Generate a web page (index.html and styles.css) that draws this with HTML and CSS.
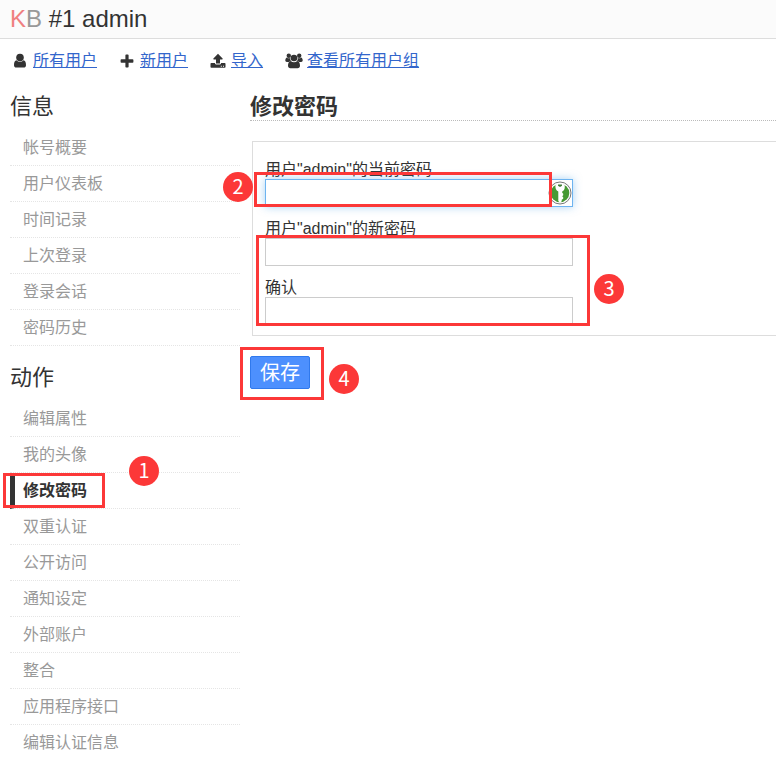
FILE: index.html
```html
<!DOCTYPE html>
<html lang="zh-CN">
<head>
<meta charset="utf-8">
<meta name="viewport" content="width=device-width, initial-scale=1">
<title>#1 admin</title>
<link rel="stylesheet" href="styles.css">
</head>
<body>
<header class="topbar">
  <h1 class="title"><a class="logo" href="#">K<span>B</span></a> #1 admin</h1>
</header>
<nav class="menu">
  <span class="menu-item"><svg class="icon" viewBox="0 0 16 16" aria-hidden="true"><circle cx="8" cy="4.600" r="3.800"/><path d="M4.600 7.200C2.700 7.500 2 9.500 2 12.200c0 1.500 1 2.300 2.300 2.300h7.400c1.300 0 2.300-.8 2.300-2.300 0-2.700-.7-4.700-2.600-5C9.500 9.500 6.500 9.500 4.600 7.200z"/></svg><a href="#">所有用户</a></span>
  <span class="menu-item"><svg class="icon" viewBox="0 0 16 16" aria-hidden="true"><path d="M7.200 1.500h1.600q.8 0 .8.800v4h4q.8 0 .8.800v1.800q0 .8-.8.800h-4v4q0 .8-.8.800H7.200q-.8 0-.8-.8v-4h-4q-.8 0-.8-.8V7.100q0-.8.800-.8h4v-4q0-.8.800-.8z"/></svg><a href="#">新用户</a></span>
  <span class="menu-item"><svg class="icon" viewBox="0 0 16 16" aria-hidden="true"><path d="M8 .8l4.600 4.700c.3.400.1.900-.4.900H10v4.200H6V6.400H3.800c-.5 0-.7-.5-.4-.9z"/><path fill-rule="evenodd" d="M1.300 10h3.600c.2 1 .9 1.600 1.800 1.600h2.600c.9 0 1.600-.6 1.800-1.600h3.600q.8 0 .8.800V14q0 .8-.8.800H1.300q-.8 0-.8-.8v-3.200q0-.8.800-.8zM10.800 12.700v1h1v-1zm2.200 0v1h1v-1z"/></svg><a href="#">导入</a></span>
  <span class="menu-item menu-item-groups"><svg class="icon icon-wide" viewBox="0 0 18 16" aria-hidden="true"><circle cx="3.800" cy="2.700" r="2.200"/><circle cx="14.200" cy="2.700" r="2.200"/><circle cx="9" cy="5" r="3.300"/><path d="M1.800 4.500C.8 4.900.3 6.200.3 7.500c0 .9.700 1.400 1.500 1.400h2.300c.4-.6 1-.9 1.800-1-.6-.9-.8-1.700-.7-2.800-1.200.5-2.400.3-3.400-.6zM16.200 4.500c1 .4 1.500 1.700 1.500 3 0 .9-.7 1.400-1.500 1.400h-2.300c-.4-.6-1-.9-1.800-1 .6-.9.800-1.700.7-2.800 1.200.5 2.400.3 3.400-.6z"/><path d="M5.800 8C3.900 8.200 3 10 3 12.800 3 14.300 4 15.200 5.400 15.200h7.200c1.400 0 2.400-.9 2.400-2.400 0-2.800-.9-4.600-2.800-4.800-1.700 1.600-4.700 1.600-6.400 0z"/></svg><a href="#">查看所有用户组</a></span>
</nav>
<div class="layout">
  <aside class="sidebar">
    <h2>信息</h2>
    <ul>
      <li><a href="#">帐号概要</a></li>
      <li><a href="#">用户仪表板</a></li>
      <li><a href="#">时间记录</a></li>
      <li><a href="#">上次登录</a></li>
      <li><a href="#">登录会话</a></li>
      <li><a href="#">密码历史</a></li>
    </ul>
    <h2>动作</h2>
    <ul>
      <li><a href="#">编辑属性</a></li>
      <li><a href="#">我的头像</a></li>
      <li class="active"><a href="#">修改密码</a><span class="frame frame-1"></span><span class="badge badge-1">1</span></li>
      <li><a href="#">双重认证</a></li>
      <li><a href="#">公开访问</a></li>
      <li><a href="#">通知设定</a></li>
      <li><a href="#">外部账户</a></li>
      <li><a href="#">整合</a></li>
      <li><a href="#">应用程序接口</a></li>
      <li><a href="#">编辑认证信息</a></li>
    </ul>
  </aside>
  <main class="content">
    <h2>修改密码</h2>
    <form>
      <div class="panel">
        <div class="field">
          <label for="current">用户"admin"的当前密码</label>
          <div class="control">
            <input class="focused" id="current" type="password">
            <svg class="key" viewBox="0 0 24 24" aria-hidden="true"><circle cx="12" cy="12" r="11" fill="#fff" stroke="#777"/><circle cx="12" cy="12" r="9.300" fill="#469a34"/><path fill="#fff" d="M7.500 3.500C7 7 8 9.500 10.300 10.500V20l1.700 2 1.700-1.700v-1.600l1.500-1v-1.500l-1-1 1-1v-1.500l-1-1v-1.200C16.500 9.500 17.300 7 16.500 3.500L12 2z"/><path fill="#3f7d38" d="M10 3.500h4v1.300L12 6l-2-1.200z"/></svg>
            <span class="frame frame-2"></span><span class="badge badge-2">2</span>
          </div>
        </div>
        <div class="field">
          <label for="new">用户"admin"的新密码</label>
          <div class="control">
            <input id="new" type="password">
            <span class="frame frame-3"></span><span class="badge badge-3">3</span>
          </div>
        </div>
        <div class="field">
          <label for="confirm">确认</label>
          <div class="control"><input id="confirm" type="password"></div>
        </div>
      </div>
      <div class="actions">
        <button type="button">保存</button>
        <span class="frame frame-4"></span><span class="badge badge-4">4</span>
      </div>
    </form>
  </main>
</div>
</body>
</html>
```
FILE: styles.css
```css
* { box-sizing: border-box; }
body {
  margin: 0;
  color: #333;
  background: #fff;
  font: 16px/20px "Liberation Sans", "Noto Sans CJK SC", sans-serif;
  overflow-x: hidden;
}
h1, h2, ul { margin: 0; padding: 0; font-weight: 400; }
ul { list-style: none; }
.topbar {
  padding: 4px 10px;
  background: #fbfbfb;
  border-bottom: 1px solid #ddd;
}
.title { font-size: 24px; line-height: 30px; }
.logo { color: #f08080; text-decoration: none; }
.logo span { color: #999; }
.menu {
  display: flex;
  gap: 22px;
  padding: 11px 12px 0;
}
.menu-item { display: flex; align-items: center; gap: 5px; }
.menu-item-groups { gap: 4px; }
.menu a { color: #36c; line-height: 22px; }
.icon { width: 16px; height: 16px; fill: #333; }
.icon-wide { width: 18px; }
.layout {
  display: flex;
  gap: 10px;
  padding: 20px 0 0 10px;
}
.sidebar { flex: 0 0 230px; }
.sidebar h2, .content h2 { padding-top: 2px; font-size: 22px; line-height: 26px; }
.sidebar h2 { margin-bottom: 10px; }
.sidebar ul { margin-bottom: 17px; }
.sidebar li {
  position: relative;
  height: 36px;
  padding: 8px 0 7px 13px;
  border-bottom: 1px dotted #e5e5e5;
}
.sidebar li a { color: #999; text-decoration: none; }
.sidebar .active {
  padding-left: 8px;
  border-left: 5px solid #333;
}
.sidebar .active a { color: #333; font-weight: 700; }
.content { flex: 1; min-width: 0; }
.content h2 { font-weight: 700; border-bottom: 1px dotted #bbb; }
.panel {
  margin: 20px -1px 0 2px;
  padding: 17px 12px 10px;
  border: 1px solid #ddd;
}
.field { margin-bottom: 11px; }
.field:last-child { margin-bottom: 0; }
label { display: block; height: 20px; line-height: 22px; }
.control { position: relative; max-width: 308px; }
input {
  display: block;
  width: 100%;
  height: 28px;
  padding: 0 30px 0 4px;
  border: 1px solid #ccc;
  background: #fff;
  font: inherit;
}
.focused {
  border-color: #6eb4f0;
  box-shadow: 0 0 9px rgba(82, 168, 236, .5);
}
.key {
  position: absolute;
  top: 2px;
  right: 1px;
  width: 24px;
  height: 24px;
}
.actions { position: relative; margin-top: 20px; }
button {
  display: block;
  width: 60px;
  height: 33px;
  padding: 0;
  color: #fff;
  background: #4d90fe;
  border: 1px solid #3079ed;
  border-radius: 2px;
  font: 20px/24px "Liberation Sans", "Noto Sans CJK SC", sans-serif;
}
.frame, .badge { position: absolute; z-index: 1; pointer-events: none; }
.frame { border: 3px solid #fc3838; }
.badge {
  width: 30px;
  height: 30px;
  border-radius: 50%;
  background: #fc3838;
  color: #fff;
  font: 20px/28px "Noto Sans CJK SC", sans-serif;
  text-align: center;
}
.frame-1 { left: -12px; top: 0; width: 102px; height: 35px; }
.badge-1 { left: 114px; top: -17px; }
.frame-2 { left: -11px; top: -7px; width: 298px; height: 35px; }
.badge-2 { left: -42px; top: -7px; }
.frame-3 { left: -9px; top: -3px; width: 334px; height: 91px; }
.badge-3 { left: 329px; top: 36px; }
.frame-4 { left: -10px; top: -9px; width: 84px; height: 53px; }
.badge-4 { left: 79px; top: 8px; }
```
